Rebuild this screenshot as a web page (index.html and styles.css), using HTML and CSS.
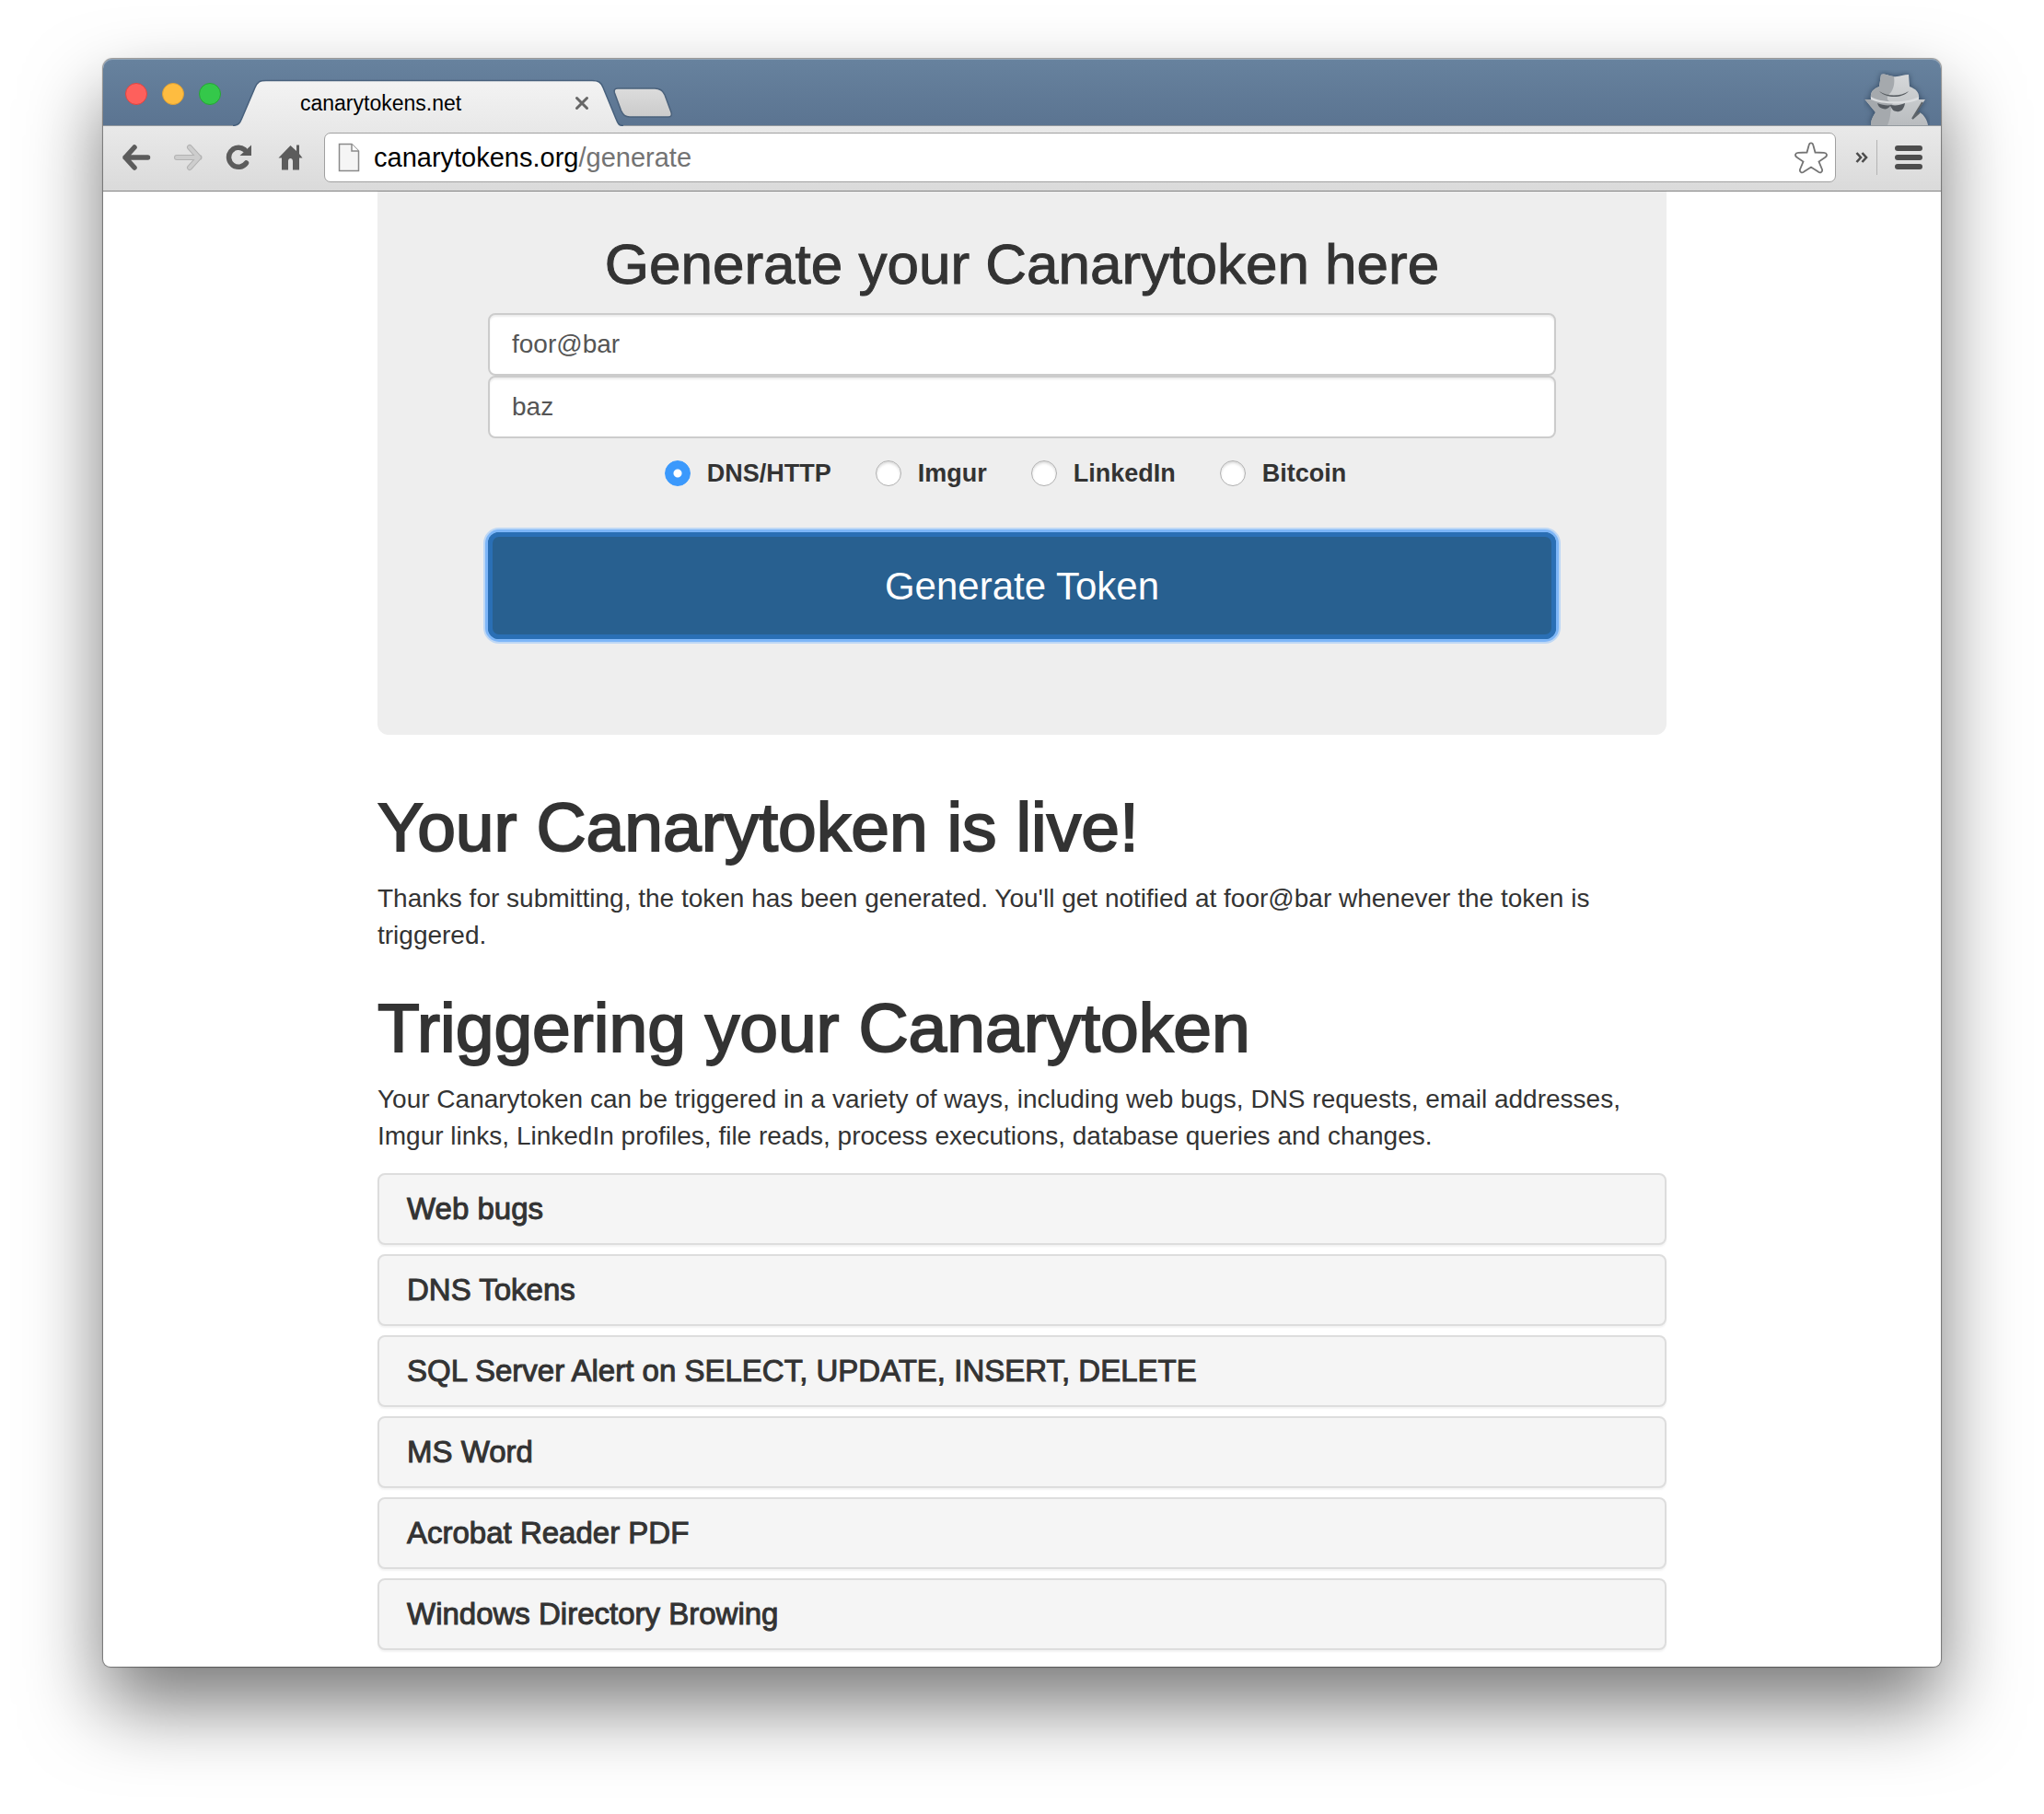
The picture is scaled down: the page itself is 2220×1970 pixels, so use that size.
FILE: index.html
```html
<!DOCTYPE html>
<html lang="en">
<head>
<meta charset="utf-8">
<title>canarytokens.net</title>
<link rel="stylesheet" href="styles.css">
</head>
<body>
<div class="window">
  <header class="titlebar">
    <div class="lights">
      <button class="light light-close" aria-label="Close window"></button>
      <button class="light light-min" aria-label="Minimise window"></button>
      <button class="light light-max" aria-label="Zoom window"></button>
    </div>
    <div class="tab">
      <svg class="tab-shape" viewBox="0 0 424 51" aria-hidden="true">
        <defs><linearGradient id="tabfill" x1="0" y1="0" x2="0" y2="1"><stop offset="0" stop-color="#f3f3f3"/><stop offset="1" stop-color="#e9e9e9"/></linearGradient></defs>
        <path d="M0 51V50.500C6 50 7.500 48 9.500 43L24 9C27 2.500 29 1.500 36 1.500H390C397 1.500 399.500 3 402 9L416 43C418 48 419 50.500 424 50.500V51Z" fill="url(#tabfill)"/>
        <path d="M0 50.500C6 50 7.500 48 9.500 43L24 9C27 2.500 29 1.500 36 1.500H390C397 1.500 399.500 3 402 9L416 43C418 48 419 50.500 424 50.500" fill="none" stroke="#47607c" stroke-width="1.500"/>
      </svg>
      <span class="tab-title">canarytokens.net</span>
      <button class="tab-close" aria-label="Close tab">
        <svg width="16" height="16" viewBox="0 0 16 16"><path d="M2.500 2.500L13.500 13.500M13.500 2.500L2.500 13.500" stroke="#666" stroke-width="3" stroke-linecap="round"/></svg>
      </button>
    </div>
    <button class="new-tab" aria-label="New tab">
      <svg width="66" height="36" viewBox="0 0 66 36">
        <defs><linearGradient id="newfill" x1="0" y1="0" x2="0" y2="1"><stop offset="0" stop-color="#dcdcdc"/><stop offset="1" stop-color="#cbcbcb"/></linearGradient></defs>
        <path d="M6 2H46C52 2 55 4 57 9L64 28C65 31 64 33 61 33H19C14 33 12 31 9.500 26L2.500 7C1.500 4 2.500 2 6 2Z" fill="url(#newfill)" stroke="#4a617b" stroke-width="1.500"/>
      </svg>
    </button>
    <svg class="incognito" width="72" height="60" viewBox="0 0 72 60" role="img" aria-label="Incognito">
      <defs><linearGradient id="spy" x1="0" y1="0" x2="0" y2="1"><stop offset="0" stop-color="#d6d8da"/><stop offset="1" stop-color="#b9bcbf"/></linearGradient></defs>
      <g class="spy-body">
        <path d="M8 60C8 54 10 51 13 46L1.500 32H8C7 24 10 21 17 18L19 5C22 3.500 25 5.500 32 7C38 8 43 5 49 5L50 18C58 21 61 25 60 32H67L55 50L61 46C66 49 69 54 70 60Z" fill="url(#spy)"/>
        <path d="M8 60C8 54 10 51 13 46L1.500 32H8C7 24 10 21 17 18L19 5C22 3.500 25 5.500 33 7C34 14 33 19 30 24C24 30 24 33 32 36C28 42 31 49 26 60Z" fill="#a5a9ad"/>
      </g>
      <path d="M8 29C18 36 48 36 60 29V32C48 38 20 38 8 32Z" fill="#dcdee0"/>
      <path d="M17 23C26 29 40 29 49 23C42 31 25 31 17 23Z" fill="#555a5f"/>
      <path d="M15 36C20 38 26 39 30 38C35 39 40 38 45 36C44 43 40 46 36 45C32 45 31 42 29 39C27 42 24 43 21 42C17 41 16 39 15 36Z" fill="#555a60"/>
      <path d="M64 35L53 53L61 46" fill="none" stroke="#5e6469" stroke-width="2"/>
    </svg>
  </header>

  <nav class="toolbar">
    <button class="tool" aria-label="Back"><svg width="32" height="30" viewBox="0 0 32 30"><path d="M4 15H28.500M14 4L4 15L14 26" fill="none" stroke="#5c5c5c" stroke-width="5.500" stroke-linecap="round" stroke-linejoin="round"/></svg></button>
    <button class="tool" aria-label="Forward"><svg width="32" height="30" viewBox="0 0 32 30"><path d="M4 15H28.500M18 4L28 15L18 26" fill="none" stroke="#b3b3b3" stroke-width="6" stroke-linecap="round" stroke-linejoin="round"/><path d="M4 15H28M18 4L28 15L18 26" fill="none" stroke="#cdcdcd" stroke-width="4" stroke-linecap="round" stroke-linejoin="round"/></svg></button>
    <button class="tool" aria-label="Reload"><svg width="32" height="30" viewBox="0 0 32 30"><path d="M23.500 21A10.500 10.500 0 1 1 21.500 6.500" fill="none" stroke="#5c5c5c" stroke-width="5.500" stroke-linecap="round"/><path d="M29 1.500V13H16.500Z" fill="#5c5c5c"/></svg></button>
    <button class="tool" aria-label="Home"><svg width="32" height="30" viewBox="0 0 32 30"><path d="M15.500 2L22 8V1.500H25V11L28.500 15.500H25V28.500H18V19C18 15 13 15 13 19V28.500H6V15.500H2.500Z" fill="#5c5c5c"/></svg></button>
    <div class="address">
      <svg class="page-icon" width="24" height="32" viewBox="0 0 24 32"><path d="M1.500 1.500H15L22.500 9V30.500H1.500Z" fill="#f5f5f5" stroke="#8a8a8a" stroke-width="1.500"/><path d="M15 1.500V9H22.500" fill="#fff" stroke="#8a8a8a" stroke-width="1.500"/></svg>
      <a class="url" href="#generate">canarytokens.org<span class="url-path">/generate</span></a>
      <svg class="star" width="36" height="36" viewBox="0 0 36 36"><path d="M15.700 4.500C16.300 1.600 19.700 1.600 20.300 4.500L22.500 12.500L32 12.800C35.300 13 36 16 33.500 17.700L26.500 22.500L30 31C30.800 33.800 28 35.300 25.800 33.600L18 28.500L10.200 33.600C8 35.300 5.200 33.800 6 31L9.500 22.500L2.500 17.700C0 16 .7 13 4 12.800L13.500 12.500Z" fill="#fff" stroke="#747474" stroke-width="1.800"/></svg>
    </div>
    <button class="more" aria-label="More extensions"><svg width="14" height="14" viewBox="0 0 14 14"><path d="M1.500 2L6 7L1.500 12M7.500 2L12 7L7.500 12" fill="none" stroke="#4c4c4c" stroke-width="2.600"/></svg></button>
    <span class="divider"></span>
    <button class="menu" aria-label="Menu"><svg width="30" height="28" viewBox="0 0 30 28"><g fill="#4d4d4d"><rect y="1" width="30" height="6" rx="3"/><rect y="11" width="30" height="6" rx="3"/><rect y="21" width="30" height="6" rx="3"/></g></svg></button>
  </nav>

  <main class="page">
    <form class="jumbotron" id="generate">
      <h2 class="form-title">Generate your Canarytoken here</h2>
      <input class="field" type="text" value="foor@bar" aria-label="Email address">
      <input class="field" type="text" value="baz" aria-label="Memo">
      <div class="kinds">
        <label class="kind"><input type="radio" name="kind" checked>DNS/HTTP</label>
        <label class="kind"><input type="radio" name="kind">Imgur</label>
        <label class="kind"><input type="radio" name="kind">LinkedIn</label>
        <label class="kind"><input type="radio" name="kind">Bitcoin</label>
      </div>
      <button class="generate" type="button">Generate Token</button>
    </form>

    <h1 class="heading first">Your Canarytoken is live!</h1>
    <p class="text">Thanks for submitting, the token has been generated. You'll get notified at foor@bar whenever the token is triggered.</p>
    <h1 class="heading">Triggering your Canarytoken</h1>
    <p class="text">Your Canarytoken can be triggered in a variety of ways, including web bugs, DNS requests, email addresses, Imgur links, LinkedIn profiles, file reads, process executions, database queries and changes.</p>

    <div class="panels">
      <h4 class="panel"><a href="#web">Web bugs</a></h4>
      <h4 class="panel"><a href="#dns">DNS Tokens</a></h4>
      <h4 class="panel"><a href="#sql">SQL Server Alert on SELECT, UPDATE, INSERT, DELETE</a></h4>
      <h4 class="panel"><a href="#word">MS Word</a></h4>
      <h4 class="panel"><a href="#pdf">Acrobat Reader PDF</a></h4>
      <h4 class="panel"><a href="#windows">Windows Directory Browing</a></h4>
    </div>
  </main>
</div>
</body>
</html>
```
FILE: styles.css
```css
* { box-sizing: border-box; }

body {
  margin: 0;
  padding: 64px 112px 160px;
  background: #fff;
  color: #333;
  font-family: "Liberation Sans", Arial, Helvetica, sans-serif;
  font-size: 28px;
  line-height: 40px;
}

button {
  padding: 0;
  border: 0;
  background: none;
  font: inherit;
}

svg { display: block; flex: none; }

a { color: inherit; text-decoration: none; }

.window {
  border-radius: 10px 10px 8px 8px;
  background: #fff;
  box-shadow: 0 0 1px 1px rgba(0, 0, 0, .4), 0 42px 84px rgba(0, 0, 0, .53);
}

/* Title bar */
.titlebar {
  display: flex;
  align-items: flex-end;
  height: 72px;
  padding-left: 24px;
  border-radius: 10px 10px 0 0;
  background: linear-gradient(#67829e, #5b7491);
  box-shadow: inset 0 1px #8fa3b7;
}

.lights {
  display: flex;
  align-self: center;
  gap: 16px;
  width: 117px;
  padding-top: 4px;
}

.light {
  width: 24px;
  height: 24px;
  border: 1px solid #e0443f;
  border-radius: 50%;
  background: #fe605c;
}
.light-min { border-color: #dea034; background: #febc40; }
.light-max { border-color: #27a435; background: #34c84a; }

.tab {
  position: relative;
  display: flex;
  align-items: center;
  justify-content: space-between;
  width: 424px;
  height: 51px;
  margin-bottom: -1px;
  padding: 0 37px 0 73px;
  color: #000;
  font-size: 23px;
  line-height: 28px;
}

.tab-shape {
  position: absolute;
  inset: 0;
  width: 424px;
  height: 51px;
}

.tab-title, .tab-close { position: relative; }

.new-tab { margin: 0 auto 6px -12px; }

.incognito { margin-right: 12px; }

.spy-body { filter: drop-shadow(0 0 3px #33485f); }

/* Toolbar */
.toolbar {
  display: flex;
  align-items: center;
  height: 72px;
  padding: 0 20px 2px;
  border-top: 1px solid #949a9f;
  border-bottom: 1px solid #848484;
  background: linear-gradient(#e9e9e9, #dadada);
}

.tool { margin-right: 24px; }

.address {
  display: flex;
  flex: 1;
  align-items: center;
  height: 54px;
  margin-left: -4px;
  padding: 0 8px 0 14px;
  border: 1px solid #a0a0a0;
  border-radius: 7px;
  background: #fff;
}

.url {
  flex: 1;
  margin-left: 15px;
  color: #000;
  font-size: 29px;
}
.url-path { color: #737373; }

.more { margin-left: 21px; }

.divider {
  width: 1px;
  height: 38px;
  margin: 0 19px 0 9px;
  background: #b4b4b4;
}

/* Page */
.page {
  max-width: 1400px;
  margin: 0 auto;
  padding-bottom: 18px;
}

.jumbotron {
  display: flex;
  flex-direction: column;
  padding: 46px 120px 104px;
  border-radius: 0 0 12px 12px;
  background: #eee;
}

.form-title {
  margin: 0 0 20px;
  font-size: 62px;
  font-weight: 400;
  line-height: 66px;
  text-align: center;
  -webkit-text-stroke: 1px #333;
}

.field {
  width: 100%;
  height: 68px;
  padding: 0 24px;
  border: 2px solid #ccc;
  border-radius: 8px;
  background: #fff;
  box-shadow: inset 0 2px 2px rgba(0, 0, 0, .075);
  color: #555;
  font: inherit;
}

.kinds {
  display: flex;
  justify-content: center;
  margin: 16px 0 42px;
  padding-left: 12px;
}

.kind {
  display: flex;
  align-items: center;
  height: 44px;
  padding-right: 48px;
  font-size: 27px;
  font-weight: 700;
}

.kind input {
  appearance: none;
  width: 28px;
  height: 28px;
  margin: 0 18px 0 0;
  border: 1px solid #b0b0b0;
  border-radius: 50%;
  background: #fff;
  box-shadow: inset 0 2px 3px rgba(0, 0, 0, .15);
}

.kind input:checked {
  border-color: #3b99fc;
  background: radial-gradient(circle, #fff 4px, #3b99fc 5px);
  box-shadow: none;
}

.generate {
  height: 116px;
  padding-top: 2px;
  border-radius: 12px;
  background: #286090;
  box-shadow: inset 0 0 0 5px #2a6fb5, 0 0 0 3px #7db6f8, 0 0 0 5px #bdd7f5;
  color: #fff;
  font-size: 42px;
}

.heading {
  margin: 40px 0 18px;
  font-size: 75px;
  font-weight: 400;
  line-height: 80px;
  -webkit-text-stroke: 2px #333;
}
.heading.first { margin-top: 60px; }

.text { margin: 0; }

.panels {
  display: flex;
  flex-direction: column;
  gap: 10px;
  margin-top: 20px;
}

.panel {
  margin: 0;
  padding: 19px 30px;
  border: 2px solid #ddd;
  border-radius: 8px;
  background: #f5f5f5;
  box-shadow: 0 2px 2px rgba(0, 0, 0, .05);
  font-size: 33px;
  font-weight: 400;
  line-height: 36px;
  -webkit-text-stroke: 1px #333;
}
```
